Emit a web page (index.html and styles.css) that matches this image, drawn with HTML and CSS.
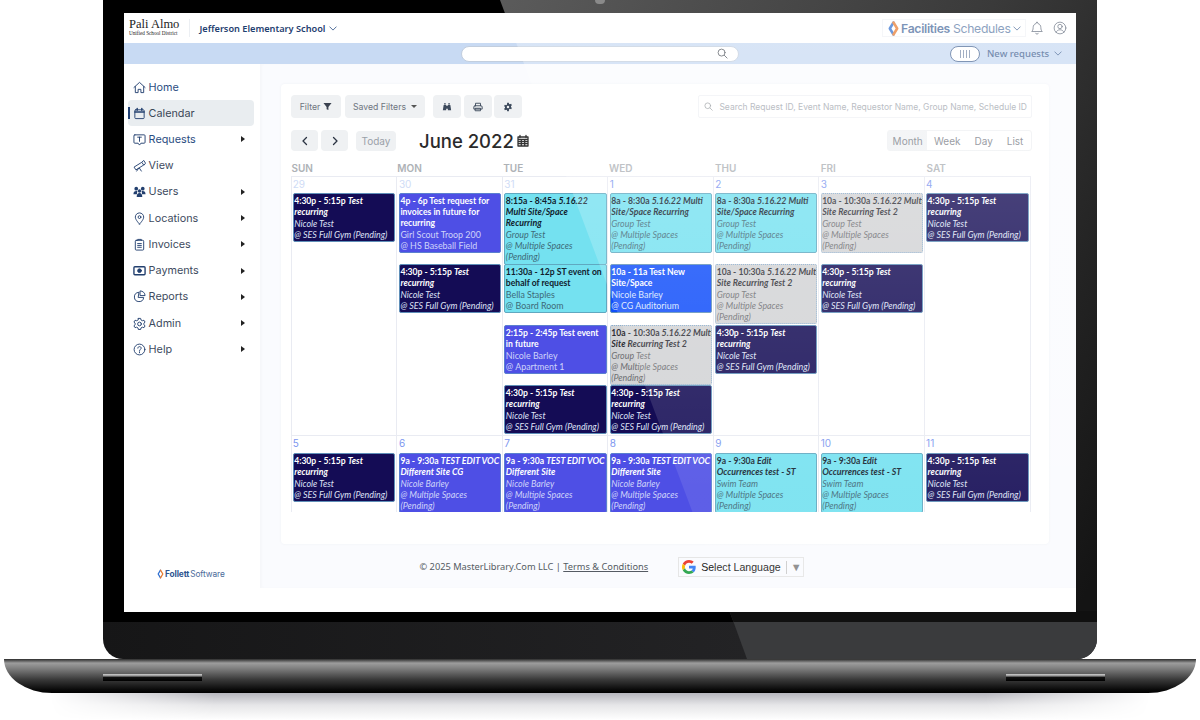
FILE: index.html
```html
<!DOCTYPE html>
<html lang="en">
  <head>
    <meta charset="UTF-8" />
    <title>Calendar</title>
    <link rel="stylesheet" href="styles.css">
  </head>
  <body>
    <div class="laptop">
      <div class="lid">
        <div class="bezel">
          <div class="bezel-glare"></div>
          <span class="camera"></span>
          <div class="screen">
            <header class="topbar">
              <div class="district">
                <span class="district-name">Pali Almo</span>
                <span class="district-sub">Unified School District</span>
              </div>
              <a class="school">Jefferson Elementary School
                <svg class="chev" viewBox="0 0 10 6"><path d="M1 1l4 4 4-4"/></svg>
              </a>
              <div class="product">
                <svg class="mark" viewBox="0 0 12 16"><path d="M6 1.5L2 8l4 6.5" stroke="#2f6fd0"/><path d="M6 1.5L10 8l-4 6.5" stroke="#e8792b"/></svg>
                <b>Facilities</b><span>Schedules</span>
                <svg class="chev" viewBox="0 0 10 6"><path d="M1 1l4 4 4-4"/></svg>
              </div>
              <svg class="top-icon" viewBox="0 0 16 16"><path d="M8 1.5a1 1 0 0 1 1 1v.4c2.2.5 3.4 2.3 3.4 4.6 0 2.5.7 3.6 1.6 4.5H2c.9-.9 1.6-2 1.6-4.5 0-2.3 1.2-4.1 3.4-4.6v-.4a1 1 0 0 1 1-1zM6.5 14a1.6 1.6 0 0 0 3 0"/></svg>
              <svg class="top-icon" viewBox="0 0 16 16"><circle cx="8" cy="8" r="6.7"/><circle cx="8" cy="6.3" r="2.5"/><path d="M3.5 13c.8-2 2.5-3 4.5-3s3.7 1 4.5 3"/></svg>
            </header>

            <div class="subbar">
              <div class="global-search">
                <svg class="lens" viewBox="0 0 12 12"><circle cx="5" cy="5" r="3.8"/><path d="M8 8l3 3"/></svg>
              </div>
              <div class="toggle"><i></i><i></i><i></i><i></i></div>
              <a class="new-requests">New requests
                <svg class="chev" viewBox="0 0 10 6"><path d="M1 1l4 4 4-4"/></svg>
              </a>
            </div>

            <div class="body-row">
              <!-- Sidebar -->
              <nav class="sidebar">
                <a class="nav-item blue"><svg viewBox="0 0 14 14"><path d="M1 7l6-5.5L13 7M2.5 6v6.5h3V9h3v3.5h3V6"/></svg>Home</a>
                <a class="nav-item active"><svg viewBox="0 0 14 14"><rect x="2" y="3" width="10" height="9.5" rx="1"/><path d="M2 5.5h10M4.5 1.5v2M9.5 1.5v2" stroke-width="1.6"/></svg>Calendar</a>
                <a class="nav-item blue more"><svg viewBox="0 0 14 14"><path d="M2 2h10a1 1 0 0 1 1 1v7a1 1 0 0 1-1 1H8.5L7 13l-1.5-2H2a1 1 0 0 1-1-1V3a1 1 0 0 1 1-1zM5 4.5h4M7 4.5V9"/></svg>Requests</a>
                <a class="nav-item"><svg viewBox="0 0 14 14"><path d="M1.5 8.5l8-5 2 3-8 5zM10 3l1.5-1.5 2 3L12 6.5M6 10l-2 3M7 10l2 3"/></svg>View</a>
                <a class="nav-item more"><svg viewBox="0 0 14 14" class="solid"><circle cx="3.5" cy="4" r="2"/><circle cx="10.5" cy="4" r="2"/><circle cx="7" cy="6.5" r="1.8"/><path d="M.5 10c0-2.5 1-3.5 3-3.5.6 0 1 .1 1.4.3-.5.8-.6 1.5-.6 3.2zM13.5 10c0-2.500-1-3.500-3-3.500-.6 0-1 .1-1.400.3.5.8.6 1.500.6 3.200zM4 13c0-3 1-4.500 3-4.500s3 1.500 3 4.500z"/></svg>Users</a>
                <a class="nav-item more"><svg viewBox="0 0 14 14"><path d="M7 13S2.5 8.5 2.5 5.5a4.5 4.5 0 0 1 9 0C11.5 8.5 7 13 7 13z"/><circle cx="7" cy="5.5" r="1.5"/></svg>Locations</a>
                <a class="nav-item more"><svg viewBox="0 0 14 14"><rect x="2.5" y="2.5" width="9" height="10.5" rx="1"/><path d="M5 2.5v-1h4v1M5 6h4M5 8h4M5 10h4"/></svg>Invoices</a>
                <a class="nav-item more"><svg viewBox="0 0 14 14"><rect x="1" y="3" width="12" height="8.5" rx="1" stroke-width="1.5"/><circle cx="7" cy="7.2" r="2" class="fill"/></svg>Payments</a>
                <a class="nav-item more"><svg viewBox="0 0 14 14"><path d="M6 2.5a5 5 0 1 0 5.5 5.5H6zM8 1a5 5 0 0 1 5 5H8z"/></svg>Reports</a>
                <a class="nav-item more"><svg viewBox="0 0 14 14"><path d="M5.8 1.5h2.4l.4 1.7 1.5.8 1.7-.5 1.2 2-1.3 1.2v1.6l1.3 1.2-1.2 2-1.7-.5-1.5.8-.4 1.7H5.8l-.4-1.7-1.500-.8-1.700.5-1.200-2 1.300-1.200V6.700L1 5.500l1.200-2 1.700.5 1.500-.8z"/><circle cx="7" cy="7.5" r="2"/></svg>Admin</a>
                <a class="nav-item more"><svg viewBox="0 0 14 14"><circle cx="7" cy="7" r="5.8"/><path d="M5.2 5.5C5.3 4.4 6 3.9 7 3.9s1.8.6 1.8 1.6c0 1.4-1.8 1.4-1.8 2.8M7 9.500v1"/></svg>Help</a>
                <div class="follett">
                  <svg class="mark" viewBox="0 0 12 16"><path d="M6 1.5L2 8l4 6.5" stroke="#2f6fd0"/><path d="M6 1.5L10 8l-4 6.5" stroke="#e8792b"/></svg>
                  <b>Follett</b><span>Software</span>
                </div>
              </nav>

              <main class="content">
                <section class="card">
                  <div class="toolbar">
                    <button class="btn filter">Filter
                      <svg viewBox="0 0 10 10"><path d="M.5 1h9L6 5.5V9L4 8V5.5z"/></svg>
                    </button>
                    <button class="btn saved">Saved Filters <span class="caret"></span></button>
                    <button class="btn icon first"><svg viewBox="0 0 12 12"><path d="M1 10l1-6.5h3V10zM11 10l-1-6.5H7V10zM5 4.5h2V8H5zM2.5 3V1.5h2V3zM7.5 3V1.5h2V3z"/></svg></button>
                    <button class="btn icon"><svg viewBox="0 0 12 12"><path d="M3 4.5v-3h6v3M2.500 4.500h7A1.500 1.500 0 0 1 11 6v2.500H1V6a1.500 1.500 0 0 1 1.500-1.500zM3 7.500h6v3H3z" fill="none" stroke="#3d4a5c" stroke-width="1.1"/></svg></button>
                    <button class="btn icon"><svg viewBox="0 0 12 12"><path d="M5 .8h2l.3 1.5 1 .5 1.4-.6 1 1.7-1.1 1v1.2l1.1 1-1 1.7-1.4-.6-1 .5L7 11.200H5l-.3-1.500-1-.5-1.400.6-1-1.700 1.100-1V5.900l-1.100-1 1-1.700 1.400.6 1-.5zM6 4.500a1.500 1.500 0 1 0 0 3 1.500 1.500 0 0 0 0-3z" fill-rule="evenodd"/></svg></button>
                    <div class="search-box">
                      <svg class="lens" viewBox="0 0 12 12"><circle cx="5" cy="5" r="3.8"/><path d="M8 8l3 3"/></svg>
                      <span>Search Request ID, Event Name, Requestor Name, Group Name, Schedule ID</span>
                    </div>
                  </div>

                  <div class="cal-head">
                    <button class="btn arrow"><svg viewBox="0 0 8 10"><path d="M5.5 1.5L2 5l3.5 3.5"/></svg></button>
                    <button class="btn arrow"><svg viewBox="0 0 8 10"><path d="M2.5 1.5L6 5 2.5 8.5"/></svg></button>
                    <button class="btn today">Today</button>
                    <h1 class="month-title">June 2022</h1>
                    <svg class="cal-glyph" viewBox="0 0 12 12"><path d="M1 2.5h10v9H1zM1 4.8h10M3 1v2M9 1v2M1 7h10M1 9.2h10M4.3 4.8v6.7M7.7 4.8v6.7"/></svg>
                    <div class="views">
                      <span class="view on">Month</span><span class="view">Week</span><span class="view">Day</span><span class="view">List</span>
                    </div>
                  </div>

                  <div class="weekdays">
                    <span>SUN</span><span>MON</span><span>TUE</span><span>WED</span><span>THU</span><span>FRI</span><span>SAT</span>
                  </div>

                  <div class="cal-scroll">
                    <div class="week first-week">
                      <div class="day">
                        <span class="num off">29</span>
                        <div class="ev navy"><b>4:30p - 5:15p <em>Test recurring</em></b><em>Nicole Test</em><em>@ SES Full Gym (Pending)</em></div>
                      </div>
                      <div class="day">
                        <span class="num off">30</span>
                        <div class="ev blue"><b>4p - 6p Test request for invoices in future for recurring</b><span>Girl Scout Troop 200</span><span>@ HS Baseball Field</span></div>
                        <div class="ev navy"><b>4:30p - 5:15p <em>Test recurring</em></b><em>Nicole Test</em><em>@ SES Full Gym (Pending)</em></div>
                      </div>
                      <div class="day">
                        <span class="num off">31</span>
                        <div class="ev cyan"><b>8:15a - 8:45a <em>5.16.22<br>Multi Site/Space<br>Recurring</em></b><em>Group Test</em><em>@ Multiple Spaces (Pending)</em></div>
                        <div class="ev cyan"><b>11:30a - 12p ST event on behalf of request</b><span>Bella Staples</span><span>@ Board Room</span></div>
                        <div class="ev blue"><b>2:15p - 2:45p Test event<br>in future</b><span>Nicole Barley</span><span>@ Apartment 1</span></div>
                        <div class="ev navy"><b>4:30p - 5:15p <em>Test recurring</em></b><em>Nicole Test</em><em>@ SES Full Gym (Pending)</em></div>
                      </div>
                      <div class="day">
                        <span class="num">1</span>
                        <div class="ev cyan"><b>8a - 8:30a <em>5.16.22 Multi Site/Space Recurring</em></b><em>Group Test</em><em>@ Multiple Spaces (Pending)</em></div>
                        <div class="ev bright"><b>10a - 11a Test New Site/Space</b><span>Nicole Barley</span><span>@ CG Auditorium</span></div>
                        <div class="ev gray"><b>10a - 10:30a <em>5.16.22 Multi Site Recurring Test 2</em></b><em>Group Test</em><em>@ Multiple Spaces (Pending)</em></div>
                        <div class="ev navy"><b>4:30p - 5:15p <em>Test recurring</em></b><em>Nicole Test</em><em>@ SES Full Gym (Pending)</em></div>
                      </div>
                      <div class="day">
                        <span class="num">2</span>
                        <div class="ev cyan"><b>8a - 8:30a <em>5.16.22 Multi Site/Space Recurring</em></b><em>Group Test</em><em>@ Multiple Spaces (Pending)</em></div>
                        <div class="ev gray"><b>10a - 10:30a <em>5.16.22 Multi Site Recurring Test 2</em></b><em>Group Test</em><em>@ Multiple Spaces (Pending)</em></div>
                        <div class="ev navy"><b>4:30p - 5:15p <em>Test recurring</em></b><em>Nicole Test</em><em>@ SES Full Gym (Pending)</em></div>
                      </div>
                      <div class="day">
                        <span class="num">3</span>
                        <div class="ev gray"><b>10a - 10:30a <em>5.16.22 Multi Site Recurring Test 2</em></b><em>Group Test</em><em>@ Multiple Spaces (Pending)</em></div>
                        <div class="ev navy"><b>4:30p - 5:15p <em>Test recurring</em></b><em>Nicole Test</em><em>@ SES Full Gym (Pending)</em></div>
                      </div>
                      <div class="day">
                        <span class="num">4</span>
                        <div class="ev navy"><b>4:30p - 5:15p <em>Test recurring</em></b><em>Nicole Test</em><em>@ SES Full Gym (Pending)</em></div>
                      </div>
                    </div>

                    <div class="week next-week">
                      <div class="day">
                        <span class="num">5</span>
                        <div class="ev navy"><b>4:30p - 5:15p <em>Test recurring</em></b><em>Nicole Test</em><em>@ SES Full Gym (Pending)</em></div>
                      </div>
                      <div class="day">
                        <span class="num">6</span>
                        <div class="ev blue"><b>9a - 9:30a <em>TEST EDIT VOC Different Site CG</em></b><em>Nicole Barley</em><em>@ Multiple Spaces (Pending)</em></div>
                      </div>
                      <div class="day">
                        <span class="num">7</span>
                        <div class="ev blue"><b>9a - 9:30a <em>TEST EDIT VOC Different Site</em></b><em>Nicole Barley</em><em>@ Multiple Spaces (Pending)</em></div>
                      </div>
                      <div class="day">
                        <span class="num">8</span>
                        <div class="ev blue"><b>9a - 9:30a <em>TEST EDIT VOC Different Site</em></b><em>Nicole Barley</em><em>@ Multiple Spaces (Pending)</em></div>
                      </div>
                      <div class="day">
                        <span class="num">9</span>
                        <div class="ev cyan"><b>9a - 9:30a <em>Edit Occurrences test - ST</em></b><em>Swim Team</em><em>@ Multiple Spaces (Pending)</em></div>
                      </div>
                      <div class="day">
                        <span class="num">10</span>
                        <div class="ev cyan"><b>9a - 9:30a <em>Edit Occurrences test - ST</em></b><em>Swim Team</em><em>@ Multiple Spaces (Pending)</em></div>
                      </div>
                      <div class="day">
                        <span class="num">11</span>
                        <div class="ev navy"><b>4:30p - 5:15p <em>Test recurring</em></b><em>Nicole Test</em><em>@ SES Full Gym (Pending)</em></div>
                      </div>
                    </div>
                  </div>
                </section>

                <footer class="page-foot">
                  <span class="copy">© 2025 MasterLibrary.Com LLC | <u>Terms &amp; Conditions</u></span>
                  <div class="translate">
                    <svg viewBox="0 0 48 48"><path fill="#EA4335" d="M24 9.5c3.54 0 6.71 1.22 9.21 3.6l6.85-6.85C35.9 2.38 30.47 0 24 0 14.62 0 6.51 5.38 2.56 13.22l7.98 6.19C12.43 13.72 17.74 9.5 24 9.5z"/><path fill="#4285F4" d="M46.98 24.55c0-1.57-.15-3.09-.38-4.55H24v9.02h12.94c-.58 2.96-2.26 5.48-4.78 7.18l7.73 6c4.51-4.18 7.09-10.36 7.09-17.65z"/><path fill="#FBBC05" d="M10.53 28.59c-.48-1.45-.76-2.99-.76-4.59s.27-3.14.76-4.59l-7.98-6.19C.92 16.46 0 20.12 0 24c0 3.88.92 7.54 2.56 10.78l7.97-6.19z"/><path fill="#34A853" d="M24 48c6.48 0 11.93-2.13 15.89-5.81l-7.73-6c-2.15 1.45-4.92 2.3-8.16 2.3-6.26 0-11.57-4.22-13.47-9.91l-7.98 6.19C6.51 42.62 14.62 48 24 48z"/></svg>
                    <span class="lang">Select Language</span>
                    <span class="lang-arrow">▼</span>
                  </div>
                </footer>
              </main>
            </div>
            <div class="screen-foot"></div>
            <div class="glare"></div>
          </div>
        </div>
        <div class="chin"></div>
      </div>

      <div class="base">
        <span class="slot"></span>
        <span class="slot"></span>
      </div>
      <div class="floor-shadow"></div>
    </div>
  </body>
</html>
```

FILE: styles.css
```css
html,
body {
  margin: 0;
  padding: 0;
  height: 100%;
  background: #fff;
  overflow: hidden;
}

body {
  font-family: "Inter", "Liberation Sans", sans-serif;
  color: #3d4a5c;
}

svg {
  display: block;
  fill: none;
  stroke-linecap: round;
  stroke-linejoin: round;
}

button {
  font-family: inherit;
}

/* Laptop frame */
.laptop {
  display: flex;
  flex-direction: column;
  height: 720px;
}

.lid {
  margin: 0 103px 0 102.5px;
  border-radius: 0 0 20px 20px;
  overflow: hidden;
}

.bezel {
  position: relative;
  padding: 13px 21px 10px;
  background: #000;
}

.bezel-glare {
  position: absolute;
  inset: 0;
  background:
    linear-gradient(to bottom, transparent 98.3%, #101010 98.3%),
    linear-gradient(120deg, #5c5c5c 28%, #3a3a3a 66%, #222 85%, #141414 98%);
  clip-path: polygon(397.5px 0, 100% 0, 100% 100%, 631px 100%);
}

.camera {
  position: absolute;
  top: 0;
  left: 492px;
  width: 10px;
  height: 4px;
  border-radius: 0 0 6px 6px;
  background: #8a8a8a;
}

.chin {
  position: relative;
  height: 37px;
  background: linear-gradient(90deg, #161617 0, #232325 65%);
}

.chin::after {
  content: "";
  position: absolute;
  inset: 0;
  background: #3a3b3d;
  clip-path: polygon(631px 0, 100% 0, 100% 100%, 644.5px 100%);
}

.base {
  display: flex;
  justify-content: space-between;
  height: 34px;
  margin: 0 4px;
  padding: 15px 91px 0 99px;
  box-sizing: border-box;
  border-radius: 0 0 48px 48px / 0 0 34px 34px;
  background: linear-gradient(to bottom, #2c2c2c 0, #9d9d9d 12%, #7a7a7a 30%, #3a3a3a 60%, #0a0a0a 90%, #000 100%);
}

.slot {
  width: 99px;
  height: 7px;
  background: linear-gradient(to bottom, #cfcfcf 0, #8a8a8a 30%, #111 45%, #000 100%);
}

.floor-shadow {
  height: 27px;
  margin: 0 50px;
  background: linear-gradient(to bottom, #b6b6bd 0, #e6e6e8 45%, #fff 100%);
  -webkit-mask-image: linear-gradient(90deg, transparent, #000 15%, #000 85%, transparent);
}

.screen {
  position: relative;
  display: flex;
  flex-direction: column;
  height: 599px;
  background: #fff;
  overflow: hidden;
}

.glare {
  position: absolute;
  inset: 0;
  background: linear-gradient(to bottom, rgba(255, 255, 255, 0.3) 0, rgba(255, 255, 255, 0.17) 45%, rgba(255, 255, 255, 0.09) 80%);
  clip-path: polygon(381.5px 0, 100% 0, 100% 100%, 606.5px 100%);
  pointer-events: none;
}

/* Top bar */
.topbar {
  display: flex;
  align-items: center;
  flex: 0 0 30px;
  padding: 0 9px 0 5.5px;
}

.district {
  display: flex;
  flex-direction: column;
  width: 60px;
  border-right: 1px solid #eceff3;
  font-family: "Liberation Serif", serif;
  color: #222;
}

.district-name {
  font-size: 12.5px;
  line-height: 11px;
}

.district-sub {
  font-size: 5.2px;
  line-height: 7px;
}

.school {
  display: flex;
  align-items: center;
  gap: 4px;
  margin-left: 9.5px;
  font-family: "Noto Sans", sans-serif;
  font-size: 9.2px;
  font-weight: 600;
  color: #1f4070;
}

.chev {
  width: 8px;
  height: 5px;
  stroke: #3f5f90;
  stroke-width: 1.1;
}

.product {
  display: flex;
  align-items: center;
  width: 144px;
  height: 18px;
  box-sizing: border-box;
  margin-left: auto;
  padding: 0 4px 0 5px;
  border: 1px solid #f1f3f6;
  font-size: 12.2px;
  letter-spacing: -0.3px;
  color: #5c7ba6;
}

.product .mark {
  flex: none;
  width: 11px;
  height: 15px;
  stroke-width: 2.8;
}

.product b {
  margin: 0 3px 0 2px;
  font-weight: 600;
  color: #46689a;
}

.product .chev {
  margin-left: auto;
}

.mark {
  width: 10px;
  height: 14px;
  stroke-width: 2.2;
}

.top-icon {
  width: 14px;
  height: 14px;
  margin-left: 9px;
  stroke: #4a5568;
  stroke-width: 0.9;
}

.product + .top-icon {
  margin-left: 4px;
}

/* Blue request bar */
.subbar {
  display: flex;
  align-items: center;
  flex: 0 0 21px;
  padding: 0 13px 0 337.5px;
  background: #c8daf3;
}

.global-search {
  display: flex;
  align-items: center;
  justify-content: flex-end;
  width: 278px;
  height: 16px;
  box-sizing: border-box;
  padding-right: 10px;
  border: 1px solid #c2cede;
  border-radius: 9px;
  background: #fff;
}

.lens {
  width: 11px;
  height: 11px;
  stroke: #4a5058;
  stroke-width: 1;
}

.toggle {
  display: flex;
  align-items: center;
  justify-content: center;
  gap: 1.5px;
  width: 30px;
  height: 16px;
  box-sizing: border-box;
  margin-left: 211px;
  border: 1px solid #4f6c98;
  border-radius: 9px;
  background: #fff;
}

.toggle i {
  width: 1.5px;
  height: 8px;
  background: #7d90ad;
}

.new-requests {
  display: flex;
  align-items: center;
  gap: 5px;
  margin-left: 7px;
  font-family: "Noto Sans", sans-serif;
  font-size: 9.5px;
  font-weight: 500;
  color: #3f5f90;
}

/* Sidebar */
.body-row {
  display: flex;
  flex: 0 0 524px;
}

.sidebar {
  display: flex;
  flex-direction: column;
  flex: 0 0 136px;
  box-sizing: border-box;
  padding: 10px 5.5px 0 4.5px;
  background: #fff;
}

.nav-item {
  position: relative;
  display: flex;
  align-items: center;
  gap: 2.6px;
  flex: 0 0 26.23px;
  padding-left: 5px;
  border-radius: 4px;
  font-size: 10.8px;
  color: #3e4b60;
}

.nav-item svg {
  width: 13px;
  height: 13px;
  stroke: #23406f;
  stroke-width: 1;
}

.nav-item svg.solid {
  fill: #23406f;
  stroke: none;
}

.nav-item svg .fill {
  fill: #23406f;
}

.nav-item.blue {
  color: #2b4d82;
}

.nav-item.active {
  background: #e9edf0;
  color: #3a4657;
}

.nav-item.active::before {
  content: "";
  position: absolute;
  left: 0;
  top: 7px;
  width: 1.5px;
  height: 12px;
  background: #1f3f73;
}

.nav-item.more::after {
  content: "";
  position: absolute;
  right: 9px;
  top: 10px;
  border-left: 4px solid #222;
  border-top: 3px solid transparent;
  border-bottom: 3px solid transparent;
}

.follett {
  display: flex;
  align-items: center;
  margin: auto 0 9px 29px;
  font-size: 8.3px;
  letter-spacing: -0.1px;
  color: #4a6a9a;
}

.follett .mark {
  width: 7px;
  height: 10px;
}

.follett b {
  margin: 0 1px;
  font-weight: 700;
  color: #2e5590;
}

/* Main content */
.content {
  display: flex;
  flex-direction: column;
  flex: 1;
  box-sizing: border-box;
  padding: 20px 27px 0 21px;
  background: #fafbfe;
  box-shadow: inset 2px 0 3px rgba(0, 0, 0, 0.02);
}

.card {
  flex: 0 0 460px;
  box-sizing: border-box;
  padding: 11px 17px 0 10.5px;
  border-radius: 4px;
  background: #fff;
  box-shadow: 0 0 3px rgba(30, 50, 90, 0.05);
}

.toolbar {
  display: flex;
  align-items: center;
  height: 23px;
}

.btn {
  display: flex;
  align-items: center;
  justify-content: center;
  height: 23px;
  padding: 0;
  border: none;
  border-radius: 4px;
  background: #eff1f3;
  font-size: 8.7px;
  color: #6e7580;
}

.filter {
  gap: 3px;
  width: 50px;
}

.filter svg {
  width: 9px;
  height: 9px;
  fill: #3a4250;
}

.saved {
  gap: 5px;
  width: 80px;
  margin-left: 4px;
}

.caret {
  border-top: 3px solid #555;
  border-left: 3px solid transparent;
  border-right: 3px solid transparent;
}

.icon {
  width: 28px;
  margin-left: 2.5px;
}

.icon.first {
  margin-left: 8px;
}

.icon svg {
  width: 10px;
  height: 10px;
  fill: #3d4a5c;
}

.search-box {
  display: flex;
  align-items: center;
  gap: 6px;
  width: 334px;
  height: 23px;
  box-sizing: border-box;
  margin-left: auto;
  padding-left: 5px;
  border: 1px solid #f0f2f5;
  border-radius: 2px;
  font-size: 8.5px;
  white-space: nowrap;
  color: #a3a8af;
}

.search-box .lens {
  flex: none;
  width: 9px;
  height: 9px;
  stroke: #8c9196;
}

.cal-head {
  display: flex;
  align-items: center;
  height: 21px;
  margin-top: 12px;
}

.arrow {
  width: 27px;
  height: 21px;
  margin-right: 3px;
}

.arrow svg {
  width: 8px;
  height: 10px;
  stroke: #2a3342;
  stroke-width: 1.3;
}

.today {
  width: 40px;
  height: 20px;
  margin-left: 5px;
  font-size: 10px;
  color: #9aa0a8;
}

.month-title {
  margin: 0 0 0 23px;
  font-size: 18.5px;
  font-weight: 500;
  color: #2b2b2b;
}

.cal-glyph {
  width: 12px;
  height: 13px;
  margin-left: 3px;
  stroke: #333;
  stroke-width: 1.3;
}

.views {
  display: flex;
  width: 145px;
  height: 21px;
  box-sizing: border-box;
  margin-left: auto;
  border: 1px solid #eff1f3;
  border-radius: 3px;
  font-size: 10px;
  color: #7b8088;
}

.view {
  display: flex;
  align-items: center;
  padding: 0 8px 0 6px;
}

.view.on {
  width: 42px;
  justify-content: center;
  padding: 0;
  background: #f0f2f4;
}

.view:nth-child(2) {
  padding: 0 8px 0 7px;
}

/* Calendar grid */
.weekdays {
  display: grid;
  grid-template-columns: repeat(7, 105.85px);
  height: 25px;
  align-items: end;
  padding: 0 0 2px 0.5px;
  box-sizing: border-box;
  font-size: 10px;
  font-weight: 600;
  color: #aeb2b6;
}

.cal-scroll {
  width: 740px;
  height: 336px;
  overflow: hidden;
  border-top: 1px solid #e9ebf2;
  box-sizing: border-box;
}

.week {
  display: grid;
  grid-template-columns: repeat(7, 1fr);
  border-left: 1px solid #e9ebf2;
  border-right: 1px solid #e9ebf2;
  box-sizing: border-box;
}

.first-week {
  height: 259px;
  border-bottom: 1px solid #e9ebf2;
}

.day {
  display: grid;
  grid-template-rows: 16px 71px 61px 60px auto;
  align-items: start;
  align-content: start;
  padding: 0 0.7px 0 1.5px;
  border-right: 1px solid #e9ebf2;
  min-width: 0;
}

.next-week .day {
  grid-template-rows: 17px auto;
}

.day:first-child {
  padding: 0 1.5px 0 0.7px;
}

.day:last-child {
  border-right: none;
}

.num {
  font-size: 10px;
  line-height: 14px;
  color: #7c96ef;
}

.num.off {
  color: #cfdcf6;
}

.ev {
  box-sizing: border-box;
  padding: 1.5px 0 1px 0.5px;
  border: 1px solid #5f8fb8;
  border-radius: 2px;
  font-family: "Lato", sans-serif;
  font-size: 8.9px;
  line-height: 11.3px;
  overflow: hidden;
}

.ev b {
  display: block;
  margin: 0 -3px -0.5px 0;
  font-size: 8.6px;
  font-weight: 700;
}

.ev span,
.ev em {
  font-weight: 400;
}

.ev b em {
  font-size: 8.85px;
  font-weight: 700;
  line-height: 10px;
}

.ev > em,
.ev > span {
  display: block;
}

.ev.navy {
  background: #140c55;
  color: #fff;
}

.ev.navy > em {
  color: #dfe2f5;
}

.ev.blue {
  background: #4e4fe5;
  color: #fff;
  border-color: #5a7fd0;
}

.ev.blue > span,
.ev.blue > em {
  color: #cfd4fa;
}

.ev.bright {
  background: #0f4dfa;
  color: #fff;
}

.ev.bright > span {
  color: #dbe5ff;
}

.ev.cyan {
  background: #74e1f0;
  color: #10202c;
  border-color: #60a8c0;
}

.ev.cyan > em,
.ev.cyan > span {
  color: #3d6a78;
}

.ev.gray {
  background: #d2d3d5;
  color: #2f2f35;
  border-color: #88aed0;
  border-style: dotted;
}

.ev.gray > em {
  color: #6d6e72;
}

/* Footer */
.page-foot {
  display: flex;
  align-items: center;
  height: 44px;
  padding-left: 139px;
}

.copy {
  font-family: "Noto Sans", sans-serif;
  font-size: 9.25px;
  color: #555b63;
}

.translate {
  display: flex;
  align-items: center;
  width: 126px;
  height: 20px;
  box-sizing: border-box;
  margin: 2px 0 0 30px;
  padding-left: 3px;
  border: 1px solid #e6e6e6;
  font-family: "Liberation Sans", sans-serif;
  font-size: 10.6px;
  color: #222;
}

.translate svg {
  flex: none;
  width: 14px;
  height: 14px;
  margin-right: 5px;
}

.lang {
  white-space: nowrap;
}

.lang-arrow {
  margin-left: 5px;
  padding-left: 4px;
  border-left: 1px solid #ccc;
  font-size: 11px;
  line-height: 13px;
  color: #888;
}

.screen-foot {
  flex: 0 0 24px;
}
```
